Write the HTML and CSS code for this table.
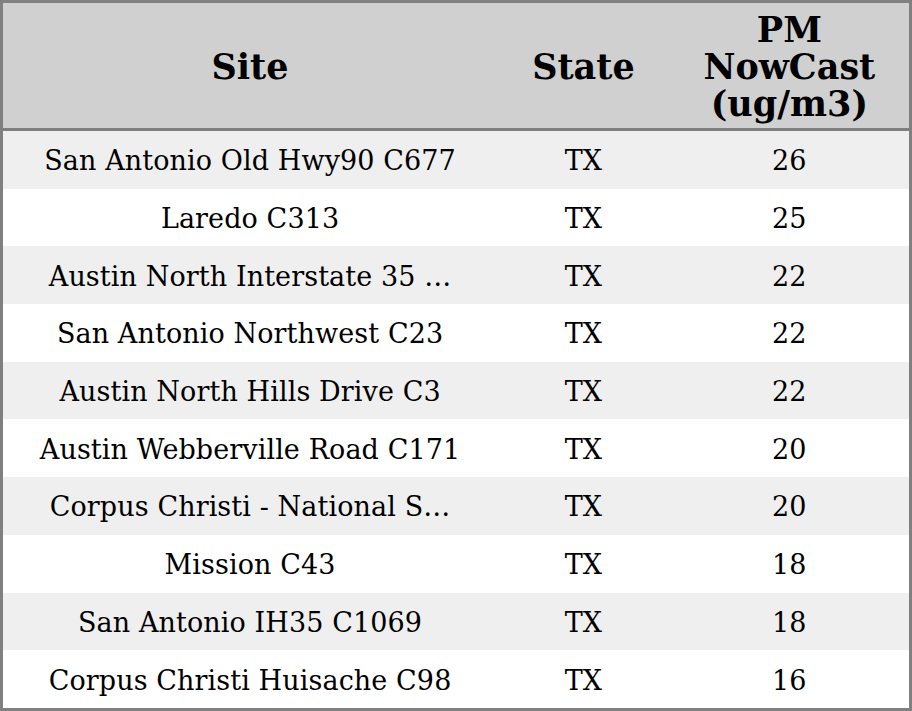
FILE: index.html
```html
<!DOCTYPE html>
<html>
<head>
<meta charset="utf-8">
<link rel="stylesheet" href="styles.css">
</head>
<body>
<table class="grid">
  <colgroup>
    <col class="c-site">
    <col class="c-state">
    <col class="c-pm">
  </colgroup>
  <thead>
    <tr class="head">
      <th>Site</th>
      <th>State</th>
      <th>PM<br>NowCast<br>(ug/m3)</th>
    </tr>
  </thead>
  <tbody>
    <tr><td>San Antonio Old Hwy90 C677</td><td>TX</td><td>26</td></tr>
    <tr><td>Laredo C313</td><td>TX</td><td>25</td></tr>
    <tr><td>Austin North Interstate 35 …</td><td>TX</td><td>22</td></tr>
    <tr><td>San Antonio Northwest C23</td><td>TX</td><td>22</td></tr>
    <tr><td>Austin North Hills Drive C3</td><td>TX</td><td>22</td></tr>
    <tr><td>Austin Webberville Road C171</td><td>TX</td><td>20</td></tr>
    <tr><td>Corpus Christi - National S…</td><td>TX</td><td>20</td></tr>
    <tr><td>Mission C43</td><td>TX</td><td>18</td></tr>
    <tr><td>San Antonio IH35 C1069</td><td>TX</td><td>18</td></tr>
    <tr><td>Corpus Christi Huisache C98</td><td>TX</td><td>16</td></tr>
  </tbody>
</table>
</body>
</html>
```
FILE: styles.css
```css
html, body {
  margin: 0;
  padding: 0;
  background: #ffffff;
}
.grid {
  width: 912px;
  height: 711px;
  border-collapse: collapse;
  border: 3px solid #808080;
  font-family: "DejaVu Serif", serif;
  color: #000;
  table-layout: fixed;
}
.c-site { width: 494px; }
.c-state { width: 172px; }
.c-pm { width: 240px; }
.head th {
  background: #d0d0d0;
  font-size: 35px;
  font-weight: bold;
  line-height: 37px;
  height: 124px;
  padding: 1px 0 0 0;
  text-align: center;
  vertical-align: middle;
  border-bottom: 3px solid #808080;
}
tbody td {
  font-size: 27px;
  letter-spacing: 0.1px;
  height: 55.7px;
  padding: 2px 0 0 0;
  text-align: center;
  vertical-align: middle;
  white-space: nowrap;
}
tbody tr:nth-child(odd) td { background: #efefef; }
tbody tr:nth-child(even) td { background: #ffffff; }
```
